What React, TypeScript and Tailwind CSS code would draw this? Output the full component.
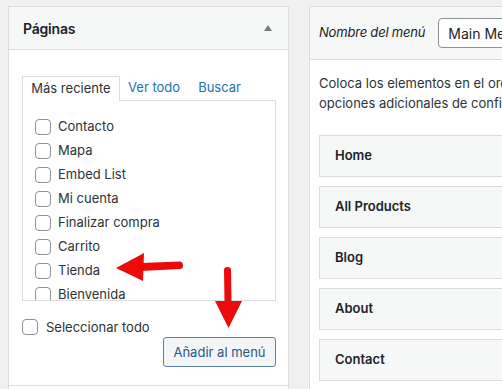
import React from "react";

const pages = ["Contacto", "Mapa", "Embed List", "Mi cuenta", "Finalizar compra", "Carrito", "Tienda", "Bienvenida"];
const items = ["Home", "All Products", "Blog", "About", "Contact"];

function Box() {
  return <span className="block w-[16px] h-[16px] shrink-0 rounded-[4px] border border-[#8c8f94] bg-white" />;
}

export default function App() {
  return (
    <div
      className="relative w-[502px] h-[389px] overflow-hidden bg-[#f0f0f1] flex items-start pt-[6px] pl-[8px] gap-[20px] text-[#1d2327]"
      style={{ fontFamily: "Inter, 'Noto Sans', sans-serif" }}
    >
      {/* Left panel */}
      <div className="w-[281px] shrink-0 h-[400px] border border-[#dcdcde] bg-white flex flex-col">
        <div className="h-[43px] bg-[#f6f7f7] border-b border-[#dcdcde] flex items-center justify-between pl-[14px] pr-[16px]">
          <span className="text-[14px] font-semibold tracking-[-0.2px]">Páginas</span>
          <svg width="8" height="6" viewBox="0 0 8 6"><path d="M4 0 L8 6 L0 6 Z" fill="#787c82" /></svg>
        </div>
        <div className="pt-[25px] pl-[13px] pr-[12px] pb-[18px] flex flex-col border-b border-[#dcdcde]">
          <div className="flex items-end text-[13px] h-[25px]">
            <div className="h-[25px] w-[98px] border border-b-0 border-[#dcdcde] bg-white flex items-center justify-center text-[#2c3338] -mb-px relative z-10">
              Más reciente
            </div>
            <span className="ml-[8px] h-[25px] flex items-center text-[#2271b1]">Ver todo</span>
            <span className="ml-[18px] h-[25px] flex items-center text-[#2271b1]">Buscar</span>
          </div>
          <div className="h-[201px] border border-[#dcdcde] overflow-hidden pt-[14px] pl-[12px]">
            {pages.map((p) => (
              <div key={p} className="h-[24px] flex items-center gap-[7px] text-[13px] text-[#2c3338]">
                <Box />
                <span>{p}</span>
              </div>
            ))}
          </div>
          <div className="mt-[18px] h-[16px] flex items-center gap-[8px] text-[13px] leading-[16px] text-[#2c3338]">
            <Box />
            <span>Seleccionar todo</span>
          </div>
          <div className="flex justify-end mt-[2px]">
            <button className="h-[30px] w-[113px] rounded-[3px] border border-[#5b7fa5] bg-[#f3f5f6] text-[13px] leading-[28px] text-[#2a5885]">
              Añadir al menú
            </button>
          </div>
        </div>
        <div className="flex-1 bg-white" />
      </div>

      {/* Right panel */}
      <div className="w-[260px] shrink-0 h-[400px] border border-[#dcdcde] border-r-0 bg-white flex flex-col">
        <div className="h-[53px] bg-[#f6f7f7] border-b border-[#dcdcde] flex items-center pl-[9px]">
          <span className="text-[13px] italic text-[#1d2327] whitespace-nowrap tracking-[-0.2px]">Nombre del menú</span>
          <div className="ml-[13px] h-[30px] w-[120px] shrink-0 rounded-[4px] border border-[#8c8f94] bg-white flex items-center pl-[9px] text-[14px] whitespace-nowrap overflow-hidden">
            Main Menu
          </div>
        </div>
        <div className="pt-[13px] pl-[9px] text-[13px] leading-[20px] text-[#2c3338] whitespace-nowrap">
          <div>Coloca los elementos en el orden que prefieras. Haz clic en la flecha a la derecha</div>
          <div>opciones adicionales de configuración.</div>
        </div>
        <div className="mt-[22px] pl-[9px] flex flex-col gap-[9px]">
          {items.map((it) => (
            <div key={it} className="h-[42px] w-[300px] border border-[#dcdcde] bg-[#f6f7f7] flex items-center pl-[15px] text-[13px] font-semibold">
              {it}
            </div>
          ))}
        </div>
      </div>

      {/* Annotation arrows */}
      <svg className="absolute left-0 top-0 pointer-events-none" width="502" height="389" viewBox="0 0 502 389">
        <path d="M141 263 L180 261.5 Q183 262 183 265.5 Q183 269 180 269 L141 271 Z" fill="#ec0b0b" />
        <path d="M116 268 L144 253 L143 281 Z" fill="#ec0b0b" />
        <path d="M224 270 Q224 267 227.5 267 Q231 267 231 270 L231.5 303 L224.5 303 Z" fill="#ec0b0b" />
        <path d="M215 301 L242 301 L228.5 328 Z" fill="#ec0b0b" />
      </svg>
    </div>
  );
}
